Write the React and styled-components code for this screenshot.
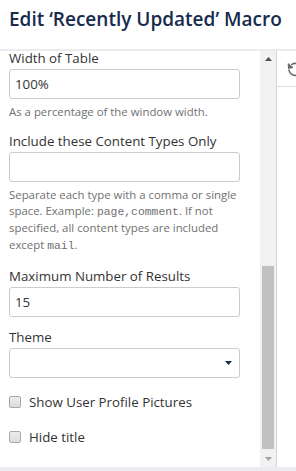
import React from "react";
import styled, { createGlobalStyle } from "styled-components";

const GlobalStyle = createGlobalStyle`
  html, body {
    margin: 0;
    padding: 0;
    background: #ffffff;
    overflow: hidden;
  }
  body {
    font-family: "Open Sans", "Noto Sans", "Liberation Sans", sans-serif;
    color: #333333;
  }
  * { box-sizing: border-box; }
`;

const Dialog = styled.div`
  width: 296px;
  height: 471px;
  display: flex;
  flex-direction: column;
  overflow: hidden;
  background: #ffffff;
`;

const Header = styled.header`
  flex: 0 0 51px;
  padding: 5px 9px 0;
  border-bottom: 2px solid #ebecf0;
`;

const Title = styled.h2`
  margin: 0;
  font-size: 19px;
  line-height: 28px;
  font-weight: 600;
  color: #172b4d;
  white-space: nowrap;
`;

const Body = styled.div`
  flex: 1;
  display: flex;
  min-height: 0;
`;

const FormPane = styled.div`
  flex: 1;
  min-width: 0;
  overflow: hidden;
`;

const FormContent = styled.form`
  margin-top: -3px;
  padding: 0 20px 0 9px;
`;

const Group = styled.div`
  margin-bottom: 10px;
`;

const Label = styled.label`
  display: block;
  font-size: 13.3px;
  line-height: 20px;
  margin-bottom: 1px;
  color: #333333;
  white-space: nowrap;
`;

const TextInput = styled.input`
  display: block;
  width: 100%;
  height: 30px;
  margin: 0;
  padding: 0 5px;
  border: 1px solid #cccccc;
  border-radius: 3px;
  font-family: inherit;
  font-size: 13.3px;
  color: #333333;
  background: #ffffff;
  outline: none;
`;

const SelectBox = styled.div`
  display: flex;
  align-items: center;
  justify-content: flex-end;
  height: 30px;
  padding: 0 7px;
  border: 1px solid #cccccc;
  border-radius: 3px;
  background: #ffffff;
`;

const Help = styled.div`
  margin-top: 5px;
  padding-bottom: ${(p) => (p.$long ? "2.5px" : "0")};
  font-size: 11.4px;
  line-height: 16.67px;
  color: #707070;
`;

const Code = styled.code`
  font-family: "Liberation Mono", "DejaVu Sans Mono", monospace;
  font-size: 11.4px;
  line-height: 1;
  color: #707070;
`;

const CheckRow = styled.label`
  display: flex;
  align-items: center;
  gap: 8px;
  margin-top: ${(p) => (p.$first ? "14px" : "15px")};
  font-size: 13.3px;
  line-height: 20px;
  color: #333333;
  white-space: nowrap;
`;

const CheckBox = styled.span`
  flex: 0 0 12px;
  width: 12px;
  height: 12px;
  border: 1px solid #a8a8a8;
  border-radius: 2px;
  background: linear-gradient(#ececec, #dcdcdc);
`;

const Scrollbar = styled.div`
  flex: 0 0 16px;
  display: flex;
  flex-direction: column;
  background: #f1f1f1;
`;

const ScrollButton = styled.div`
  flex: 0 0 16px;
  display: flex;
  align-items: center;
  justify-content: center;
`;

const Track = styled.div`
  flex: 1;
  display: flex;
  flex-direction: column;
  justify-content: flex-end;
  padding: 0 2px 2px;
`;

const Thumb = styled.div`
  height: 183px;
  background: #c1c1c1;
`;

const SidePane = styled.div`
  flex: 0 0 20px;
  border-left: 1px solid #d4d4d4;
  overflow: hidden;
`;

const SideTop = styled.div`
  height: 36px;
  border-bottom: 1px solid #dddddd;
  padding: 9px 0 0 10px;
`;

const Footer = styled.div`
  flex: 0 0 4px;
  background: #ebecf0;
`;

const Caret = ({ dir = "down", color }) => (
  <svg width="7" height="4" viewBox="0 0 7 4">
    <path d={dir === "up" ? "M0 4 L3.5 0 L7 4 Z" : "M0 0 L7 0 L3.5 4 Z"} fill={color} />
  </svg>
);

const UndoIcon = () => (
  <svg width="16" height="16" viewBox="0 0 16 16" fill="none" stroke="#6b6b6b" strokeWidth="1.6">
    <path d="M2 8.5 A6 6 0 1 0 4.2 3.8" />
    <path d="M1.5 2.5 L1.8 7 L6 6.2" fill="#6b6b6b" />
  </svg>
);

export default function App() {
  return (
    <>
      <GlobalStyle />
      <Dialog>
        <Header>
          <Title>Edit ‘Recently Updated’ Macro</Title>
        </Header>
        <Body>
          <FormPane>
            <FormContent>
              <Group>
                <Label>Width of Table</Label>
                <TextInput defaultValue="100%" />
                <Help>As a percentage of the window width.</Help>
              </Group>
              <Group>
                <Label>Include these Content Types Only</Label>
                <TextInput defaultValue="" />
                <Help $long>
                  Separate each type with a comma or single space. Example:{" "}
                  <Code>page,comment</Code>. If not specified, all content types are
                  included except <Code>mail</Code>.
                </Help>
              </Group>
              <Group>
                <Label>Maximum Number of Results</Label>
                <TextInput defaultValue="15" />
              </Group>
              <Group>
                <Label>Theme</Label>
                <SelectBox>
                  <Caret color="#172b4d" />
                </SelectBox>
              </Group>
              <CheckRow $first>
                <CheckBox />
                Show User Profile Pictures
              </CheckRow>
              <CheckRow>
                <CheckBox />
                Hide title
              </CheckRow>
            </FormContent>
          </FormPane>
          <Scrollbar>
            <ScrollButton>
              <Caret dir="up" color="#505050" />
            </ScrollButton>
            <Track>
              <Thumb />
            </Track>
            <ScrollButton>
              <Caret color="#a3a3a3" />
            </ScrollButton>
          </Scrollbar>
          <SidePane>
            <SideTop>
              <UndoIcon />
            </SideTop>
          </SidePane>
        </Body>
        <Footer />
      </Dialog>
    </>
  );
}
